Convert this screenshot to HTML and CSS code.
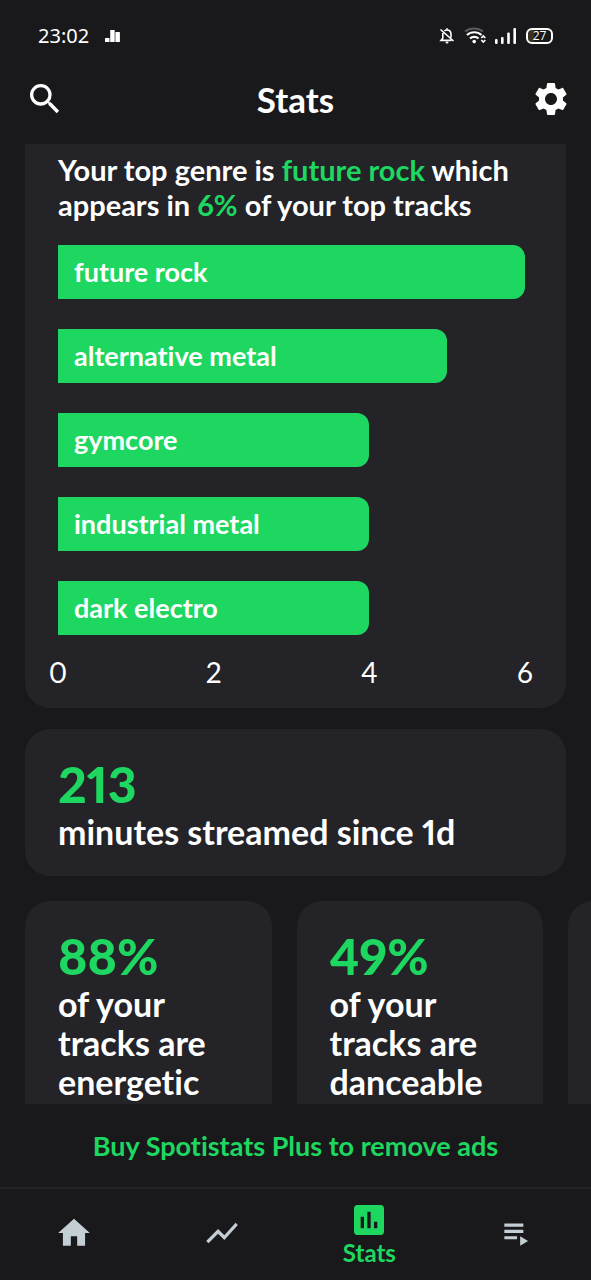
FILE: index.html
```html
<!DOCTYPE html>
<html lang="en">
<head>
<meta charset="utf-8">
<meta name="viewport" content="width=device-width, initial-scale=1">
<title>Stats</title>
<link rel="stylesheet" href="styles.css">
</head>
<body>
<div class="app">
  <div class="status">
    <span class="clock">23:02</span>
    <svg class="notice" width="16" height="14" viewBox="0 0 16 14" fill="currentColor" aria-hidden="true"><rect x="0" y="9" width="4.500" height="4" rx=".6"/><rect x="5.200" y="1" width="4.500" height="12" rx=".6"/><rect x="10.400" y="3" width="4.500" height="10" rx=".6"/></svg>
    <div class="status-icons">
      <svg width="16" height="18" viewBox="0 0 16 18" fill="none" stroke="currentColor" stroke-width="1.600" aria-hidden="true"><path d="M5.400 3.900C6 3.300 6.800 3 8 3c2.700 0 4 2 4 4.500v3M3.800 6v5.200L2 13.400h10.500M1.500 2.500l13 11.500M8 1.200V3"/><path d="M6.700 15.500h2.600" stroke-width="1.800"/></svg>
      <svg width="24" height="18" viewBox="0 0 24 18" fill="none" stroke="currentColor" aria-hidden="true"><path d="M2 4.500c5-4 13-4 18 0" stroke-width="1.800" opacity=".28"/><path d="M4 8c4-3.700 10.500-3.700 14.500 0M7 11.500c2.300-2.200 6.200-2.200 8.500 0" stroke-width="2.200"/><circle cx="11.200" cy="14.600" r="1.800" fill="currentColor" stroke="none"/><path d="M18.300 11l2-2 2 2M18.300 13l2 2 2-2" stroke-width="1.600"/></svg>
      <svg width="22" height="18" viewBox="0 0 22 18" fill="currentColor" aria-hidden="true"><rect y="12" width="2.600" height="5" rx="1"/><rect x="6" y="10" width="2.600" height="7" rx="1"/><rect x="12.200" y="5.500" width="2.600" height="11.500" rx="1"/><rect x="18.400" y="1" width="2.600" height="16" rx="1"/></svg>
      <span class="battery">27</span>
    </div>
  </div>

  <header class="topbar">
    <button class="icon-button" aria-label="Search"><svg width="40" height="40" viewBox="0 0 24 24" fill="currentColor"><path d="M15.500 14h-.79l-.28-.27A6.470 6.470 0 0 0 16 9.500 6.500 6.500 0 1 0 9.500 16c1.610 0 3.090-.59 4.230-1.570l.27.28v.79l5 4.990L20.490 19l-4.990-5zm-6 0C7.010 14 5 11.990 5 9.500S7.010 5 9.500 5 14 7.010 14 9.500 11.990 14 9.500 14z"/></svg></button>
    <h1 class="title">Stats</h1>
    <button class="icon-button" aria-label="Settings"><svg width="40" height="40" viewBox="0 0 24 24" fill="currentColor"><path d="M19.140 12.940c.04-.3.060-.61.060-.94 0-.32-.02-.64-.07-.94l2.030-1.580c.18-.14.230-.41.120-.61l-1.920-3.320c-.12-.22-.37-.29-.59-.22l-2.390.96c-.5-.38-1.030-.7-1.620-.94l-.36-2.540c-.04-.24-.24-.41-.48-.41h-3.840c-.24 0-.43.170-.47.410l-.36 2.540c-.59.240-1.130.570-1.620.940l-2.390-.96c-.22-.08-.47 0-.59.220L2.740 8.870c-.12.210-.08.470.120.610l2.030 1.580c-.05.3-.09.630-.09.940s.02.640.070.940l-2.030 1.580c-.18.140-.23.410-.12.610l1.920 3.320c.12.220.370.290.590.220l2.390-.96c.5.380 1.030.7 1.620.940l.36 2.540c.05.240.240.410.480.410h3.840c.24 0 .44-.17.470-.41l.36-2.540c.59-.24 1.130-.56 1.620-.94l2.390.96c.22.080.470 0 .59-.22l1.920-3.320c.12-.22.070-.47-.12-.61l-2.010-1.580zM12 15.600c-1.980 0-3.600-1.620-3.600-3.600s1.620-3.600 3.600-3.600 3.600 1.620 3.600 3.600-1.620 3.600-3.600 3.600z"/></svg></button>
  </header>

  <main class="content">
    <section class="card genres">
      <p class="summary">Your top genre is <em>future rock</em> which appears in <em>6%</em> of your top tracks</p>
      <ul class="bars">
        <li class="bar" style="width:100%">future rock</li>
        <li class="bar" style="width:83.330%">alternative metal</li>
        <li class="bar" style="width:66.670%">gymcore</li>
        <li class="bar" style="width:66.670%">industrial metal</li>
        <li class="bar" style="width:66.670%">dark electro</li>
      </ul>
      <div class="axis"><span>0</span><span>2</span><span>4</span><span>6</span></div>
    </section>
    <section class="card minutes">
      <strong class="figure">213</strong>
      <p class="label">minutes streamed since 1d</p>
    </section>
    <div class="tiles">
      <section class="card tile"><strong class="figure">88%</strong><p class="label">of your tracks are energetic</p></section>
      <section class="card tile"><strong class="figure">49%</strong><p class="label">of your tracks are danceable</p></section>
      <section class="card tile"></section>
    </div>
  </main>

  <a class="promo" href="#plus">Buy Spotistats Plus to remove ads</a>

  <nav class="tabs">
    <a class="tab" href="#home" aria-label="Home"><svg width="38" height="38" viewBox="0 0 24 24" fill="currentColor"><path d="M10 20v-6h4v6h5v-8h3L12 3 2 12h3v8z"/></svg></a>
    <a class="tab" href="#trends" aria-label="Trends"><svg width="38" height="38" viewBox="0 0 24 24" fill="currentColor"><path d="M3.500 18.490l6-6.010 4 4L22 6.920l-1.410-1.410-7.090 7.970-4-4L2 16.990z"/></svg></a>
    <a class="tab active" href="#stats" aria-current="page"><svg width="40" height="40" viewBox="0 0 24 24" fill="currentColor"><path d="M19 3H5c-1.100 0-2 .9-2 2v14c0 1.100.9 2 2 2h14c1.100 0 2-.9 2-2V5c0-1.100-.9-2-2-2zM9 17H7v-7h2v7zm4 0h-2V7h2v10zm4 0h-2v-4h2v4z"/></svg><span>Stats</span></a>
    <a class="tab" href="#playlists" aria-label="Playlists"><svg width="38" height="38" viewBox="0 0 24 24" fill="currentColor"><path d="M4 10h12v2H4zM4 6h12v2H4zM4 14h8v2H4zM14 14v6l5-3z"/></svg></a>
  </nav>
</div>
</body>
</html>
```
FILE: styles.css
```css
* { box-sizing: border-box; }

body {
  margin: 0;
  background: #19191b;
  color: #fff;
  font-family: Lato, "Open Sans", sans-serif;
  font-weight: 700;
  font-variant-ligatures: none;
  font-variant-numeric: proportional-nums;
}

h1, p, ul { margin: 0; padding: 0; }
ul { list-style: none; }
svg { display: block; flex: none; }
a { text-decoration: none; }

.app {
  display: flex;
  flex-direction: column;
  height: 100vh;
  overflow: hidden;
}

.status {
  display: flex;
  align-items: center;
  flex: none;
  height: 72px;
  padding: 0 38px;
}
.clock { font: 400 20px/24px "Noto Sans", sans-serif; }
.notice { margin-left: 16px; }
.status-icons {
  display: flex;
  align-items: center;
  gap: 9px;
  margin-left: auto;
}
.status-icons svg + svg { margin-left: -1px; }
.battery {
  width: 27px;
  height: 16px;
  border: 2px solid #fff;
  border-radius: 6px;
  background: linear-gradient(90deg, #3a3020 27%, transparent 27%);
  font: 400 12px/12px "Open Sans", sans-serif;
  text-align: center;
}

.topbar {
  display: flex;
  align-items: center;
  justify-content: space-between;
  flex: none;
  height: 72px;
  padding: 0 20px 19px 25px;
}
.icon-button {
  padding: 0;
  border: 0;
  background: none;
  color: inherit;
}
.title {
  flex: 1;
  padding-right: 5px;
  font-size: 35px;
  line-height: 40px;
  text-align: center;
}

.content {
  flex: 1;
  min-height: 0;
  overflow: hidden;
  padding: 0 25px;
}
.card {
  border-radius: 25px;
  background: #232328;
}

.genres {
  padding: 8px 41px 16px 33px;
  border-radius: 0 0 25px 25px;
}
.summary {
  margin-bottom: 23px;
  font-size: 29px;
  line-height: 35px;
}
.summary em { color: #1ed760; font-style: normal; }
.bars { display: grid; gap: 30px; }
.bar {
  padding: 0 16px;
  border-radius: 0 12px 12px 0;
  background: #1ed760;
  font-size: 27px;
  line-height: 54px;
}
.axis {
  display: flex;
  justify-content: space-between;
  margin: 17px -10px 0;
  font-size: 28px;
  font-weight: 400;
  line-height: 40px;
}
.axis span { width: 20px; text-align: center; }

.minutes { margin-top: 21px; padding: 27px 33px 25px; }
.figure {
  display: block;
  color: #1ed760;
  font-size: 50px;
  line-height: 56px;
}
.label { font-size: 34px; line-height: 39px; }

.tiles {
  display: grid;
  grid-auto-flow: column;
  grid-auto-columns: calc(50% - 24px);
  gap: 25px;
  margin-top: 25px;
}
.tile { padding: 27px 33px; }

.promo {
  flex: none;
  padding-top: 22px;
  height: 83px;
  color: #1ed760;
  font-size: 27px;
  line-height: 40px;
  text-align: center;
}

.tabs {
  display: grid;
  grid-template-columns: repeat(4, 1fr);
  flex: none;
  height: 93px;
  border-top: 2px solid #242427;
}
.tab {
  display: flex;
  flex-direction: column;
  align-items: center;
  justify-content: center;
  padding-bottom: 4px;
  color: #c3ced5;
}
.active { color: #1ed760; font-size: 24px; line-height: 26px; }
```
